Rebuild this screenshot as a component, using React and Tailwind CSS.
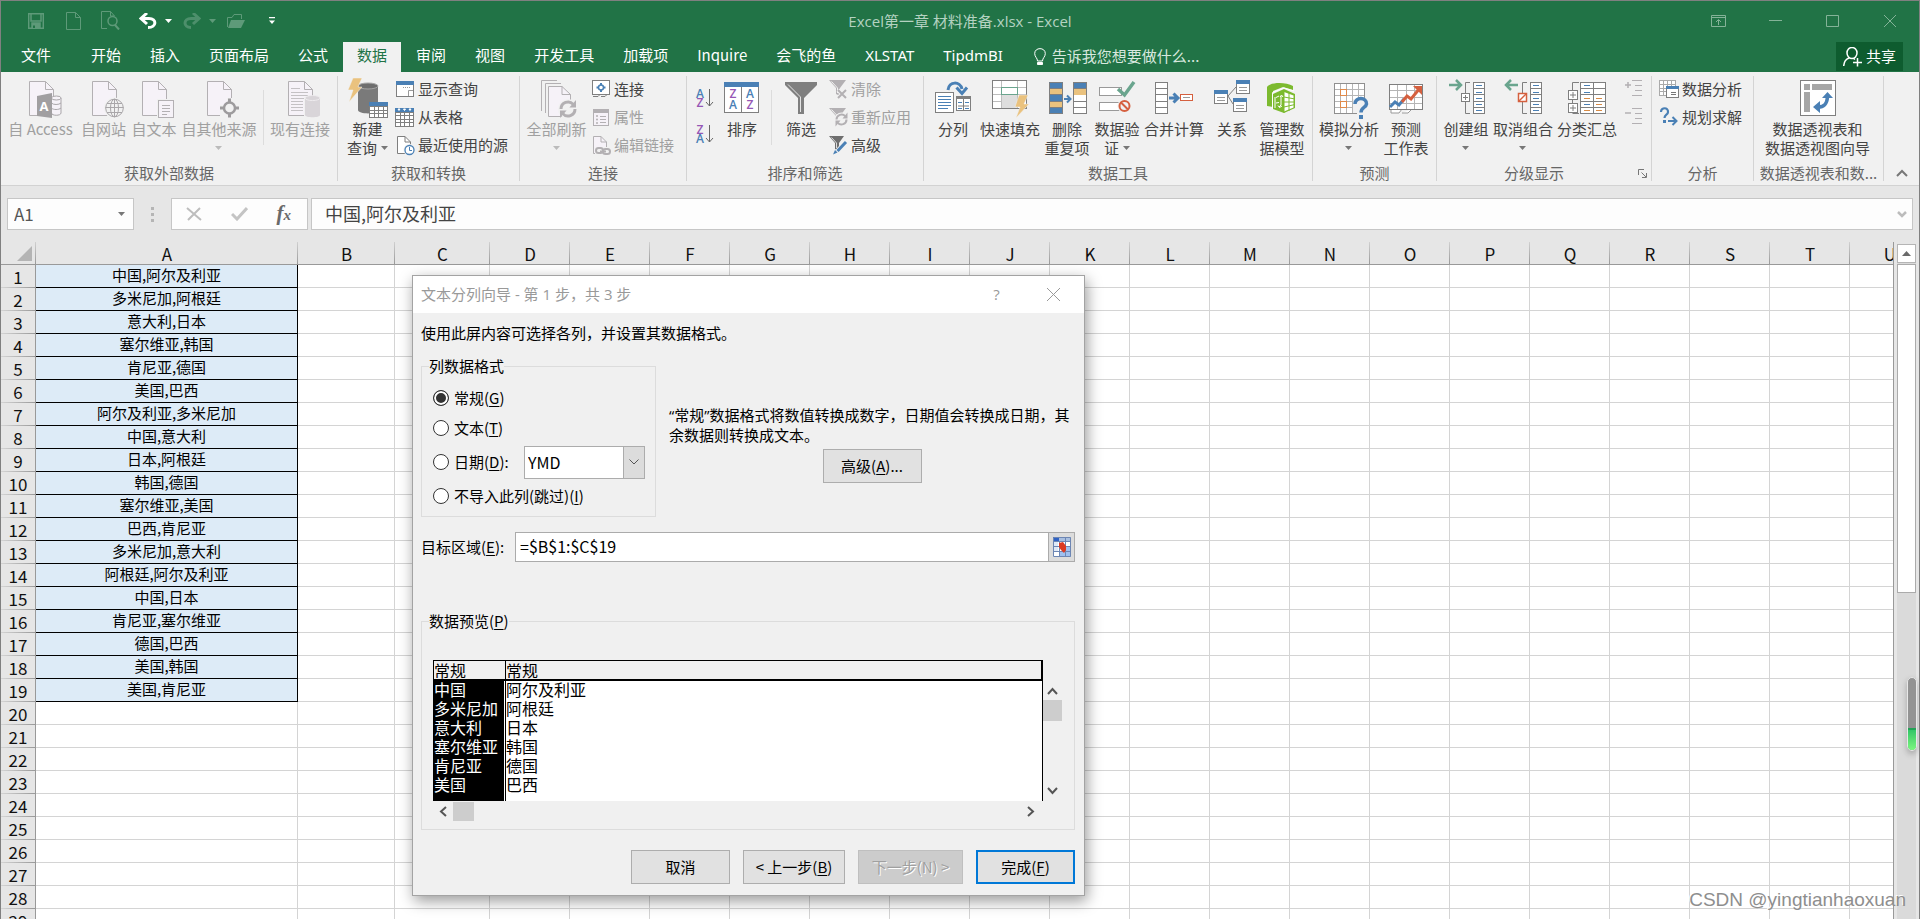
import React from "react";

const BLUE = "#4a80b5";
const GREY = "#7f7f7f";
const DIM = "#b3b0b3";
const GOLD = "#eac27e";
const RED = "#d5603f";
const PURPLE = "#9557b5";
const GREEN = "#6aa58e";
const PALE = "#f6f2f8";
const PANEL = "#f1f1f1";

/* ---------- drawing helpers ---------- */

function Icon({ size = 40, children }) {
  return (
    <svg
      width={size}
      height={size}
      viewBox={`0 0 ${size} ${size}`}
      fill="none"
      className="block shrink-0 overflow-visible"
      aria-hidden="true"
    >
      {children}
    </svg>
  );
}

function Letter({ x, y, size = 12, color, children, weight = "600" }) {
  return (
    <text x={x} y={y} fontSize={size} fill={color} fontWeight={weight} fontFamily="'Open Sans', sans-serif" textAnchor="middle">
      {children}
    </text>
  );
}

function Doc() {
  return (
    <>
      <path d="M8.500 2.500H24.500L32.500 10.500V36.500H8.500Z" fill={PALE} stroke={DIM} />
      <path d="M24.500 2.500V10.500H32.500" stroke={DIM} />
    </>
  );
}

function Cells({ x, y, w, h, cols, rows, stroke = GREY, fill = "#fff" }) {
  const lines = [];
  for (let i = 1; i < cols; i++) lines.push(`M${Math.round(x + (w * i) / cols - 0.5) + 0.5} ${y}V${y + h}`);
  for (let i = 1; i < rows; i++) lines.push(`M${x} ${Math.round(y + (h * i) / rows - 0.5) + 0.5}H${x + w}`);
  return (
    <>
      <rect x={x} y={y} width={w} height={h} fill={fill} stroke={stroke} />
      <path d={lines.join("")} stroke={stroke} />
    </>
  );
}

function Refresh({ cx, cy, r, color, sw = 3 }) {
  return (
    <g transform={`translate(${cx} ${cy})`} stroke={color} strokeWidth={sw}>
      <path d={`M${-r} 0A${r} ${r} 0 0 1 ${r * 0.75} ${-r * 0.66}`} />
      <path d={`M${r} 0A${r} ${r} 0 0 1 ${-r * 0.75} ${r * 0.66}`} />
      <path d={`M${r + 1} ${-r - 2}V${-r * 0.2}H${r * 0.2}Z`} fill={color} stroke="none" />
      <path d={`M${-r - 1} ${r + 2}V${r * 0.2}H${-r * 0.2}Z`} fill={color} stroke="none" />
    </g>
  );
}

/* ---------- large ribbon icons ---------- */

const AccessIcon = () => (
  <Icon>
    <Doc />
    <path d="M29 17H41V39H29Z" fill={PANEL} />
    <path d="M30.500 19V34C30.500 37 40 37 40 34V19" fill={PALE} stroke="#a9a6a9" />
    <ellipse cx="35.300" cy="19" rx="4.800" ry="2" fill={PALE} stroke="#a9a6a9" />
    <path d="M30.500 24C32 26 38 26 40 24M30.500 29C32 31 38 31 40 29" stroke="#a9a6a9" />
    <path d="M16 17L31 14V39L16 37Z" fill="#a19fa1" />
    <Letter x={23} y={32} size={13} color="#fff" weight="bold">A</Letter>
  </Icon>
);

const WebIcon = () => (
  <Icon>
    <Doc />
    <circle cx="30.500" cy="29" r="10.500" fill={PANEL} />
    <circle cx="30.500" cy="29" r="8.800" stroke="#a9a6a9" />
    <ellipse cx="30.500" cy="29" rx="4" ry="8.800" stroke="#a9a6a9" />
    <path d="M21.500 28.500H39.500M23 24.500H38M23 33.500H38M30.500 20V38" stroke="#a9a6a9" />
  </Icon>
);

const TextIcon = () => (
  <Icon>
    <Doc />
    <rect x="23" y="20" width="18" height="19" fill={PANEL} />
    <rect x="24.500" y="21.500" width="15" height="17" fill={PALE} stroke={DIM} />
    <path d="M28 26.500H36M28 29.500H36M28 32.500H36M28 35.500H33" stroke={DIM} />
  </Icon>
);

const OtherIcon = () => (
  <Icon>
    <Doc />
    <path d="M21 26H25L28 23V19H33V23L36 26H41V38H21Z" fill={PANEL} />
    <circle cx="30.500" cy="29" r="5.500" fill={PANEL} stroke="#9d9b9d" strokeWidth="2.500" />
    <path d="M30.500 19.500V24M30.500 34V38.500M21 29H25.500M35.500 29H40" stroke="#9d9b9d" strokeWidth="3" />
  </Icon>
);

const ExistingIcon = () => (
  <Icon>
    <Doc />
    <path d="M11 9.500H20M11 13.500H28M11 16.500H28M11 19.500H26M11 22.500H23M11 25.500H23M11 28.500H23M11 31.500H23" stroke="#c4c1c4" />
    <path d="M24 18H41V39H24Z" fill={PANEL} />
    <path d="M25 19V36C25 39 40 39 40 36V19Z" fill="#d9d5d9" />
    <ellipse cx="32.500" cy="19" rx="7.500" ry="2.500" fill="#d9d5d9" stroke="#efecef" />
  </Icon>
);

const NewQueryIcon = () => (
  <Icon>
    <path d="M10 7V31C10 35.500 30 35.500 30 31V7Z" fill="#7a7a7a" />
    <ellipse cx="20" cy="7" rx="10" ry="3" fill="#6e6e6e" stroke="#a5a5a5" />
    <path d="M5 -1H14L10 8H14L1 23L5 11H0Z" fill={GOLD} stroke={PANEL} strokeWidth="0.500" />
    <rect x="21" y="23" width="19" height="17" fill={PANEL} />
    <Cells x={21.5} y={23.5} w={18} h={15} cols={4} rows={4} />
    <rect x="21" y="23" width="19" height="4" fill={BLUE} />
  </Icon>
);

const RefreshAllIcon = () => (
  <Icon>
    <path d="M4.500 32V1.500H20M8.500 34V4.500H24" stroke={DIM} />
    <path d="M11.500 7.500H25L33.500 15.500V37.500H11.500Z" fill={PALE} stroke={DIM} />
    <path d="M25 7.500V15.500H33.500" stroke={DIM} />
    <circle cx="31" cy="30" r="10" fill={PANEL} />
    <Refresh cx={31} cy={30} r={7} color={DIM} />
  </Icon>
);

const SortIcon = () => (
  <Icon>
    <rect x="2.500" y="3.500" width="34" height="30" fill="#fff" stroke={GREY} />
    <rect x="2" y="3" width="35" height="5" fill={BLUE} />
    <path d="M19.500 8V34" stroke={GREY} />
    <Letter x={11} y={19} color={PURPLE}>Z</Letter>
    <Letter x={11} y={30} color={BLUE}>A</Letter>
    <Letter x={28} y={19} color={BLUE}>A</Letter>
    <Letter x={28} y={30} color={PURPLE}>Z</Letter>
  </Icon>
);

const FilterIcon = () => (
  <Icon>
    <path d="M4 3H36V6L23 19V35H17V19L4 6Z" fill={GREY} />
    <path d="M7 5.500L19.500 18V33" stroke="#e4e4e4" />
  </Icon>
);

const SplitIcon = () => (
  <Icon>
    <rect x="2.500" y="13.500" width="18" height="20" fill="#fff" stroke={GREY} />
    <path d="M5 17.500H18M5 20.500H18M5 23.500H18M5 26.500H18M5 29.500H15" stroke={BLUE} />
    <rect x="23.500" y="17.500" width="14" height="14" fill="#fff" stroke={GREY} />
    <rect x="23" y="17" width="15" height="3" fill={GREY} />
    <path d="M30.500 20V32M25 27H36" stroke={GREY} />
    <path d="M25 23.500H29M32 23.500H36M25 29.500H29M32 29.500H36" stroke={BLUE} />
    <path d="M15 11C16 2 27 2 29 10" stroke={BLUE} strokeWidth="3" />
    <path d="M23.500 8.500L29 14.500L34 8.500" stroke={BLUE} strokeWidth="3" />
  </Icon>
);

const FlashFillIcon = () => (
  <Icon>
    <rect x="2.500" y="1.500" width="34" height="28" fill="#fff" stroke={GREY} />
    <rect x="12" y="16" width="15" height="13" fill="#dedede" />
    <path d="M11.500 2V29M27.500 2V29M3 8.500H36M3 15.500H36M3 22.500H11" stroke="#bdbdbd" />
    <rect x="2.500" y="1.500" width="34" height="28" stroke={GREY} />
    <rect x="11.500" y="8.500" width="16" height="7" fill="#fff" stroke={GREEN} />
    <path d="M29 16H38L34 25H39L26 39L30 28H25Z" fill={GOLD} stroke={PANEL} strokeWidth="0.500" />
  </Icon>
);

const DedupeIcon = () => (
  <Icon>
    <rect x="2" y="3" width="14" height="32" fill={BLUE} />
    <path d="M2 9.500H16V15.500H2ZM2 22.500H16V28.500H2Z" fill={GOLD} />
    <path d="M2.500 3.500H15.500V34.500H2.500ZM2 9.500H16M2 15.500H16M2 22.500H16M2 28.500H16" stroke={GREY} />
    <path d="M17 20H23M20 16.500L23.500 20L20 23.500" stroke={BLUE} strokeWidth="2" />
    <Cells x={26.5} y={3.5} w={13} h={31} cols={1} rows={5} />
    <rect x="27" y="4" width="12" height="5" fill={BLUE} />
    <rect x="27" y="10" width="12" height="6" fill={GOLD} />
  </Icon>
);

const ValidateIcon = () => (
  <Icon>
    <rect x="2.500" y="8.500" width="22" height="8" fill="#fff" stroke="#999" />
    <rect x="2.500" y="23.500" width="22" height="8" fill="#fff" stroke="#999" />
    <path d="M21 10L27.500 16L37 3" stroke={GREEN} strokeWidth="3.500" />
    <circle cx="27.500" cy="27" r="7" fill={PANEL} />
    <circle cx="27.500" cy="27" r="5" stroke={RED} strokeWidth="2" />
    <path d="M24 23.500L31 30.500" stroke={RED} strokeWidth="2" />
  </Icon>
);

const ConsolidateIcon = () => (
  <Icon>
    <Cells x={1.5} y={3.5} w={12} h={31} cols={1} rows={5} />
    <path d="M15 19H24M19.500 14.500L24 19L19.500 23.500" stroke={BLUE} strokeWidth="3" />
    <rect x="26.500" y="15.500" width="12" height="6" fill="#fff" stroke={RED} />
    <path d="M29 18.500H36" stroke="#999" />
  </Icon>
);

function Entity({ x, y }) {
  return (
    <>
      <rect x={x + 0.5} y={y + 0.5} width="13" height="13" fill="#fff" stroke={GREY} />
      <rect x={x} y={y} width="14" height="4" fill={BLUE} />
      <path d={`M${x + 3} ${y + 7.5}H${x + 11}M${x + 3} ${y + 10.5}H${x + 11}`} stroke="#999" />
    </>
  );
}

const RelationIcon = () => (
  <Icon>
    <path d="M16 17L24 8M16 17L21 25" stroke={GREY} />
    <Entity x={2} y={11} />
    <Entity x={24} y={1} />
    <Entity x={21} y={19} />
  </Icon>
);

const ModelIcon = () => (
  <Icon>
    <path d="M5 8C8 3 24 3 31 7V11L21 8L11 12V28L5 27Z" fill="#7cba2f" />
    <path d="M11 15L22 10L33 15V29L22 34L11 30Z" fill="#7cba2f" />
    <path d="M10.500 30V13.500L22 9L32 12" stroke="#fff" />
    <path d="M22 13L31.500 16.500V28.500L22 32.500Z" fill="#fff" />
    <path d="M22 11V34M27 13V32M22 18L33 20M22 23H33M22 28L33 25.500" stroke="#7cba2f" />
    <path d="M13 18V29M14 18.500L17 17M14 24L17 23.500M19 17V26L17 28M16 26.500L17.500 28.500L20 27M18 18L19.500 16L21 18" stroke="#fff" />
  </Icon>
);

const WhatIfIcon = () => (
  <Icon>
    <Cells x={5.5} y={4.5} w={30} h={30} cols={5} rows={5} stroke="#b5b5b5" />
    <rect x="5.500" y="4.500" width="30" height="30" stroke="#8f8f8f" />
    <rect x="11.500" y="10.500" width="6" height="6" fill="#fff" stroke="#e08a4a" />
    <rect x="11.500" y="22.500" width="6" height="6" fill="#fff" stroke="#e08a4a" />
    <path d="M24 20H40V40H28V34H24Z" fill={PANEL} />
    <path d="M26 25C26 17.500 38 18 37.500 25C37 29 32 28 32 33.500" stroke={BLUE} strokeWidth="3.500" />
    <rect x="30" y="36" width="4" height="4" fill={BLUE} />
  </Icon>
);

const ForecastIcon = () => (
  <Icon>
    <path d="M5 30V34H13L16 30M16 34H22L26 30" fill="#fff" stroke="#999" />
    <Cells x={3.5} y={5.5} w={33} h={25} cols={4} rows={4} stroke="#b5b5b5" />
    <rect x="3.500" y="5.500" width="33" height="25" stroke={GREY} />
    <path d="M4 28L9 23L13 26L18 20" stroke={BLUE} strokeWidth="3" />
    <path d="M16 23L21 17L25 20L34 9" stroke={RED} strokeWidth="3" />
    <path d="M27 7H36V16Z" fill={RED} />
  </Icon>
);

const GroupIcon = () => (
  <Icon>
    <path d="M3 6H15M10 1L15 6L10 11" stroke={GREEN} strokeWidth="2.500" />
    <path d="M24 3.500H19.500V14M19.500 23V34.500H24" stroke={GREY} />
    <rect x="15.500" y="14.500" width="8" height="8" fill="#fff" stroke={GREY} />
    <path d="M17 18.500H22M19.500 16V21" stroke={GREY} />
    <Cells x={27.5} y={3.5} w={11} h={31} cols={1} rows={5} />
    <path d="M30 6.500H36M30 13.500H36M30 19.500H36M30 25.500H36M30 31.500H36" stroke={BLUE} />
  </Icon>
);

const UngroupIcon = () => (
  <Icon>
    <path d="M15 6H3M8 1L3 6L8 11" stroke={GREEN} strokeWidth="2.500" />
    <path d="M24 3.500H19.500V14M19.500 23V34.500H24" stroke={GREY} />
    <rect x="15.500" y="14.500" width="8" height="8" fill="#fff" stroke={RED} strokeWidth="1.500" />
    <path d="M16 22L23 15" stroke={RED} strokeWidth="1.500" />
    <Cells x={27.5} y={3.5} w={11} h={31} cols={1} rows={5} />
    <path d="M30 6.500H36M30 13.500H36M30 19.500H36M30 25.500H36M30 31.500H36" stroke={BLUE} />
  </Icon>
);

const SubtotalIcon = () => (
  <Icon>
    <path d="M12 3.500H5.500V11M5.500 21V24M12 34.500H5.500" stroke={GREY} />
    <rect x="1.500" y="11.500" width="9" height="9" fill="#fff" stroke={GREY} />
    <rect x="1.500" y="24.500" width="9" height="9" fill="#fff" stroke={GREY} />
    <path d="M3 16H9M6 13V19M3 29H9M6 26V32" stroke={GREY} />
    <Cells x={13.5} y={3.5} w={25} h={31} cols={2} rows={5} />
    <path d="M17 6.500H23M17 13.500H23M17 25.500H23" stroke={BLUE} />
    <path d="M17 19.500H23M29 19.500H35M17 31.500H23M29 31.500H35M29 25.500H35" stroke="#d88b45" />
  </Icon>
);

const PivotIcon = () => (
  <Icon>
    <rect x="2.500" y="1.500" width="35" height="35" fill="#fff" stroke={GREY} />
    <path d="M6 5H12V11H6ZM14 5H34V11H14ZM6 13H12V33H6Z" fill="#a6a6a6" />
    <path d="M20 28C27 28 29 24 29.500 18" stroke={BLUE} strokeWidth="3.500" />
    <path d="M24 19L29.500 13L35 19ZM22 22V34L15 28Z" fill={BLUE} />
  </Icon>
);

/* ---------- small ribbon icons ---------- */

const ShowQueryIcon = () => (
  <Icon size={20}>
    <rect x="1.500" y="1.500" width="17" height="15" fill="#fff" stroke={GREY} />
    <rect x="1" y="1" width="18" height="4" fill={BLUE} />
    <path d="M8 7.500H16" stroke="#999" strokeDasharray="1 1" />
    <path d="M13.500 16V10.500H18" stroke="#999" />
  </Icon>
);

const FromTableIcon = () => (
  <Icon size={20}>
    <Cells x={0.5} y={0.5} w={18} h={18} cols={4} rows={5} />
    <rect x="0" y="0" width="19" height="4" fill={BLUE} />
    <path d="M3 1L4 2.500L5 1ZM8.500 1L9.500 2.500L10.500 1ZM14 1L15 2.500L16 1Z" fill="#fff" stroke="#fff" />
  </Icon>
);

const RecentIcon = () => (
  <Icon size={20}>
    <path d="M2.500 .5H10L15.500 6V17.500H2.500Z" fill="#fff" stroke={GREY} />
    <path d="M10 .5V6H15.500" stroke={GREY} />
    <circle cx="14.500" cy="14" r="6" fill={PANEL} />
    <circle cx="14.500" cy="14" r="4.500" fill="#fff" stroke={BLUE} strokeWidth="1.300" />
    <path d="M14.500 11V14.500H17" stroke={BLUE} />
  </Icon>
);

const LinkIcon = () => (
  <Icon size={20}>
    <rect x="1.500" y=".5" width="17" height="14" fill="#fff" stroke={GREY} />
    <circle cx="10" cy="7.500" r="2.500" stroke={BLUE} strokeWidth="1.500" />
    <path d="M10 3V5M10 10V12M5.500 7.500H7.500M12.500 7.500H14.500" stroke={BLUE} strokeWidth="2" />
    <path d="M2 16.500H7L8.500 15M10 16.500H14L15.500 15" stroke={GREY} />
  </Icon>
);

const PropsIcon = () => (
  <Icon size={20}>
    <rect x="2.500" y="1.500" width="15" height="16" fill={PALE} stroke={DIM} />
    <rect x="2" y="1" width="16" height="4" fill={DIM} />
    <circle cx="6" cy="8" r="1" fill={DIM} />
    <circle cx="6" cy="11.500" r="1" fill={DIM} />
    <circle cx="6" cy="15" r="1" fill={DIM} />
    <path d="M9 8.500H15M9 11.500H15M9 14.500H15" stroke={DIM} />
  </Icon>
);

const EditLinkIcon = () => (
  <Icon size={20}>
    <path d="M2.500 .5H10L15.500 6V17.500H2.500Z" fill={PALE} stroke={DIM} />
    <path d="M10 .5V6H15.500" stroke={DIM} />
    <rect x="4" y="11" width="16" height="9" fill={PANEL} />
    <rect x="5" y="12" width="7" height="5" rx="2.500" stroke={DIM} strokeWidth="2" />
    <rect x="12" y="13" width="7" height="5" rx="2.500" stroke={DIM} strokeWidth="2" />
    <path d="M9 15.500H15" stroke={DIM} strokeWidth="2" />
  </Icon>
);

const SortLetters = ({ first, last, firstColor, lastColor }) => (
  <Icon size={20}>
    <Letter x={5} y={10} color={firstColor}>{first}</Letter>
    <Letter x={5} y={19} color={lastColor}>{last}</Letter>
    <path d="M14.500 1V18M11 14L14.500 18L18 14" stroke="#666" />
  </Icon>
);

const ClearIcon = () => (
  <Icon size={20}>
    <path d="M1 0H18L12 8V16L8 14V8Z" fill={DIM} />
    <path d="M3.500 1.500L9.500 8V13" stroke={PANEL} />
    <path d="M10 10L18 18M18 10L10 18" stroke={PANEL} strokeWidth="4" />
    <path d="M10 10L18 18M18 10L10 18" stroke={DIM} strokeWidth="2" />
  </Icon>
);

const ReapplyIcon = () => (
  <Icon size={20}>
    <path d="M1 0H18L12 8V16L8 14V8Z" fill={DIM} />
    <path d="M3.500 1.500L9.500 8V13" stroke={PANEL} />
    <circle cx="13.500" cy="11.500" r="7" fill={PANEL} />
    <Refresh cx={13.5} cy={11.5} r={5} color={DIM} sw={2} />
  </Icon>
);

const AdvancedIcon = () => (
  <Icon size={20}>
    <path d="M1 0H16L11 7V15L7 13V7Z" fill="#6e6e6e" />
    <path d="M3.500 1.500L8.500 7V12" stroke="#ddd" />
    <path d="M19 5L8 17" stroke={PANEL} strokeWidth="5" />
    <path d="M18 6L9.500 15" stroke={BLUE} strokeWidth="3" />
    <path d="M5 18.500L7 14L9.500 16.500Z" fill={BLUE} />
  </Icon>
);

const DetailIcon = ({ plus }) => (
  <Icon size={20}>
    <path d={plus ? "M2 5H8M5 2V8" : "M2 5H8"} stroke={DIM} strokeWidth="1.500" />
    <path d="M9 .5H19M12 5.500H19M12 10.500H19M9 15.500H19" stroke={DIM} />
  </Icon>
);

const AnalysisIcon = () => (
  <Icon size={20}>
    <Cells x={0.5} y={0.5} w={16} h={15} cols={4} rows={4} stroke="#aaa" />
    <rect x="7.500" y="6.500" width="12" height="11" fill="#fff" stroke={GREY} />
    <rect x="7" y="6" width="13" height="3" fill={BLUE} />
    <path d="M12 12.500H17M12 14.500H17" stroke="#777" />
  </Icon>
);

const SolverIcon = () => (
  <Icon size={20}>
    <path d="M2 4C2 -1 9.500 -1 9 4C9 7 5.500 6.500 5.500 10" stroke={BLUE} strokeWidth="2.200" />
    <rect x="4" y="12" width="3" height="3" fill={BLUE} />
    <path d="M9 13H17M13.500 9L17.500 13L13.500 17" stroke={BLUE} strokeWidth="2" />
  </Icon>
);

/* ---------- ribbon building blocks ---------- */

function Arrow({ className = "text-[#777]" }) {
  return (
    <svg width="7" height="4" viewBox="0 0 7 4" className={`inline-block shrink-0 ${className}`} aria-hidden="true">
      <path d="M0 0H7L3.500 4Z" fill="currentColor" />
    </svg>
  );
}

function Big({ icon, lines, arrow, disabled, className }) {
  const tone = disabled ? "text-[#a0a0a0]" : "text-[#444]";
  return (
    <button type="button" disabled={disabled} className={`flex shrink-0 flex-col items-center pt-[3px] ${tone} ${className}`}>
      {icon}
      <span className="flex flex-col items-center whitespace-nowrap leading-[19px]">
        <span>{lines[0]}</span>
        <span className="flex h-[19px] items-center gap-1">
          {lines[1]}
          {arrow && <Arrow className={disabled ? "text-[#bbb]" : "text-[#777]"} />}
        </span>
      </span>
    </button>
  );
}

function Small({ icon, label, disabled, name }) {
  return (
    <button
      type="button"
      disabled={disabled}
      aria-label={name}
      className={`flex h-7 items-center gap-[3px] whitespace-nowrap leading-5 ${disabled ? "text-[#a0a0a0]" : "text-[#444]"}`}
    >
      {icon}
      {label && <span className="pb-[3px]">{label}</span>}
    </button>
  );
}

function Group({ label, className, children, launcher, inset = "pl-1" }) {
  return (
    <section aria-label={label} className={`flex shrink-0 flex-col border-r border-[#d4d4d4] ${className}`}>
      <div className={`flex flex-1 items-start ${inset}`}>{children}</div>
      <div className="flex items-center justify-center">
        <h2 className="flex-1 whitespace-nowrap text-center leading-4 text-[#666]">{label}</h2>
        {launcher && (
          <button type="button" aria-label="对话框启动器" className="w-5 pr-1">
            <svg width="9" height="9" viewBox="0 0 9 9" fill="none" stroke="#777" className="ml-auto">
              <path d="M0.500 6V0.500H6M3.500 3.500L8 8M8.500 4V8.500H4" />
            </svg>
          </button>
        )}
      </div>
    </section>
  );
}

const Rule = ({ className }) => <div className={`mt-[14px] h-[55px] w-px bg-[#dcdcdc] ${className}`} />;

function Ribbon() {
  return (
    <div className="flex h-[114px] shrink-0 overflow-hidden border-b border-[#d2d2d2] bg-[#f1f1f1] py-1">
      <Group label="获取外部数据" className="w-[337px]" inset="pl-[2px]">
        <Big className="w-[75px]" disabled icon={<AccessIcon />} lines={["自 Access"]} />
        <Big className="w-[51px]" disabled icon={<WebIcon />} lines={["自网站"]} />
        <Big className="w-[50px]" disabled icon={<TextIcon />} lines={["自文本"]} />
        <Big className="w-20" disabled arrow icon={<OtherIcon />} lines={["自其他来源"]} />
        <Rule className="mx-1" />
        <Big className="w-16" disabled icon={<ExistingIcon />} lines={["现有连接"]} />
      </Group>
      <Group label="获取和转换" className="w-[182px]" inset="pl-[2px]">
        <Big className="w-[55px]" arrow icon={<NewQueryIcon />} lines={["新建", "查询"]} />
        <div className="flex flex-col">
          <Small icon={<ShowQueryIcon />} label="显示查询" />
          <Small icon={<FromTableIcon />} label="从表格" />
          <Small icon={<RecentIcon />} label="最近使用的源" />
        </div>
      </Group>
      <Group label="连接" className="w-[167px]" inset="pl-[2px]">
        <Big className="w-[69px]" disabled arrow icon={<RefreshAllIcon />} lines={["全部刷新"]} />
        <div className="flex flex-col">
          <Small icon={<LinkIcon />} label="连接" />
          <Small disabled icon={<PropsIcon />} label="属性" />
          <Small disabled icon={<EditLinkIcon />} label="编辑链接" />
        </div>
      </Group>
      <Group label="排序和筛选" className="w-[237px]" inset="pl-2">
        <div className="flex flex-col pt-1">
          <button type="button" aria-label="升序" className="flex h-9 items-center">
            <SortLetters first="A" last="Z" firstColor={BLUE} lastColor={PURPLE} />
          </button>
          <button type="button" aria-label="降序" className="flex h-9 items-center">
            <SortLetters first="Z" last="A" firstColor={PURPLE} lastColor={BLUE} />
          </button>
        </div>
        <Big className="w-[54px]" icon={<SortIcon />} lines={["排序"]} />
        <Rule className="mx-[2px]" />
        <Big className="w-[54px]" icon={<FilterIcon />} lines={["筛选"]} />
        <div className="flex flex-col">
          <Small disabled icon={<ClearIcon />} label="清除" />
          <Small disabled icon={<ReapplyIcon />} label="重新应用" />
          <Small icon={<AdvancedIcon />} label="高级" />
        </div>
      </Group>
      <Group label="数据工具" className="w-[389px]">
        <Big className="w-[50px]" icon={<SplitIcon />} lines={["分列"]} />
        <Big className="w-16" icon={<FlashFillIcon />} lines={["快速填充"]} />
        <Big className="w-[50px]" icon={<DedupeIcon />} lines={["删除", "重复项"]} />
        <Big className="w-[50px]" arrow icon={<ValidateIcon />} lines={["数据验", "证"]} />
        <Big className="w-16" icon={<ConsolidateIcon />} lines={["合并计算"]} />
        <Big className="w-[52px]" icon={<RelationIcon />} lines={["关系"]} />
        <Big className="w-[48px]" icon={<ModelIcon />} lines={["管理数", "据模型"]} />
      </Group>
      <Group label="预测" className="w-[124px]">
        <Big className="w-16" arrow icon={<WhatIfIcon />} lines={["模拟分析"]} />
        <Big className="w-[50px]" icon={<ForecastIcon />} lines={["预测", "工作表"]} />
      </Group>
      <Group label="分级显示" className="w-[215px]" launcher>
        <Big className="w-[50px]" arrow icon={<GroupIcon />} lines={["创建组"]} />
        <Big className="w-16" arrow icon={<UngroupIcon />} lines={["取消组合"]} />
        <Big className="w-16" icon={<SubtotalIcon />} lines={["分类汇总"]} />
        <div className="flex flex-col pl-1">
          <Small disabled name="显示明细数据" icon={<DetailIcon plus />} />
          <Small disabled name="隐藏明细数据" icon={<DetailIcon />} />
        </div>
      </Group>
      <Group label="分析" className="w-[102px]" inset="pl-[7px]">
        <div className="flex flex-col">
          <Small icon={<AnalysisIcon />} label="数据分析" />
          <Small icon={<SolverIcon />} label="规划求解" />
        </div>
      </Group>
      <Group label="数据透视表和数..." className="w-[130px]" inset="pr-[2px]">
        <Big className="w-full" icon={<PivotIcon />} lines={["数据透视表和", "数据透视图向导"]} />
      </Group>
      <button type="button" aria-label="折叠功能区" className="mt-auto flex h-4 flex-1 items-center justify-center">
        <svg width="12" height="8" viewBox="0 0 12 8" fill="none" stroke="#777" strokeWidth="2">
          <path d="M1 7L6 2L11 7" />
        </svg>
      </button>
    </div>
  );
}

/* ---------- title bar and tabs ---------- */

function QuickAccess() {
  const dim = "#5e9a79";
  return (
    <div className="flex items-center pl-[27px]">
      <button type="button" aria-label="保存" className="w-[38px]">
        <svg width="16" height="16" viewBox="0 0 16 16" fill="none" stroke={dim} strokeWidth="1.500">
          <path d="M.7 .7H15.300V15.300H.7ZM3 1V8H13V1" />
          <path d="M4 10H12V16H4Z" fill={dim} />
          <path d="M6 12.500V15" stroke="#217346" strokeWidth="2" />
        </svg>
      </button>
      <button type="button" aria-label="新建" className="w-[35px]">
        <svg width="15" height="18" viewBox="0 0 15 18" fill="none" stroke={dim}>
          <path d="M.5 .5H9.500L14.500 5.500V17.500H.5ZM9.500 .5V5.500H14.500" />
        </svg>
      </button>
      <button type="button" aria-label="打印预览" className="w-[38px]">
        <svg width="19" height="19" viewBox="0 0 19 19" fill="none" stroke={dim}>
          <path d="M6 17.500H.5V.5H9.500L13.500 5M9.500 .5V5H13.500" />
          <circle cx="11.500" cy="10" r="4.500" strokeWidth="1.500" fill="#217346" />
          <path d="M14 14L18 18.500" strokeWidth="2" />
        </svg>
      </button>
      <button type="button" aria-label="撤消" className="flex w-11 items-center gap-2">
        <svg width="18" height="16" viewBox="0 0 18 16" fill="none" stroke="#fff" strokeWidth="3">
          <path d="M3 5.500H10C18 5.500 18 14.500 9 14.500" />
          <path d="M8 0L2 5.500L8 11" />
        </svg>
        <Arrow className="text-white" />
      </button>
      <button type="button" aria-label="恢复" disabled className="flex w-11 items-center gap-2">
        <svg width="18" height="16" viewBox="0 0 18 16" fill="none" stroke="#4d8f6b" strokeWidth="3">
          <path d="M15 5.500H8C0 5.500 0 14.500 8 14.500" />
          <path d="M10 0L16 5.500L10 11" />
        </svg>
        <Arrow className="text-[#5e9a79]" />
      </button>
      <button type="button" aria-label="打开" className="w-[42px]">
        <svg width="18" height="14" viewBox="0 0 18 14" fill="none">
          <path d="M.5 13V3.500H5L7 .5H14.500V5" stroke={dim} />
          <path d="M4 6H18L14 14H1Z" fill={dim} />
        </svg>
      </button>
      <button type="button" aria-label="自定义快速访问工具栏">
        <svg width="6" height="7" viewBox="0 0 6 7" fill="#fff">
          <path d="M0 0H6V1.200H0ZM0 3.500H6L3 7Z" />
        </svg>
      </button>
    </div>
  );
}

function TitleBar() {
  return (
    <div className="grid h-[41px] shrink-0 grid-cols-[1fr_auto_1fr] items-center pb-[2px]">
      <QuickAccess />
      <h1 className="font-['Open_Sans','Noto_Sans_CJK_SC',sans-serif] leading-5 text-[#b4d2c1]">Excel第一章 材料准备.xlsx - Excel</h1>
      <div className="flex justify-end pr-px">
        <button type="button" aria-label="功能区显示选项" className="flex w-[57px] justify-center">
          <svg width="15" height="12" viewBox="0 0 15 12" fill="none" stroke="#84b398">
            <path d="M.5 .5H14.500V11.500H.5ZM.5 2.500H14.500M7.500 10V5M5 7L7.500 4.500L10 7" />
          </svg>
        </button>
        <button type="button" aria-label="最小化" className="flex w-[57px] items-center justify-center">
          <svg width="13" height="1" viewBox="0 0 13 1"><path d="M0 .5H13" stroke="#84b398" /></svg>
        </button>
        <button type="button" aria-label="最大化" className="flex w-[57px] justify-center">
          <svg width="13" height="12" viewBox="0 0 13 12"><path d="M.5 .5H12.500V11.500H.5Z" fill="none" stroke="#84b398" /></svg>
        </button>
        <button type="button" aria-label="关闭" className="flex w-[57px] justify-center">
          <svg width="12" height="12" viewBox="0 0 12 12"><path d="M0 0L12 12M12 0L0 12" stroke="#84b398" /></svg>
        </button>
      </div>
    </div>
  );
}

const TABS = ["开始", "插入", "页面布局", "公式", "数据", "审阅", "视图", "开发工具", "加载项", "Inquire", "会飞的鱼", "XLSTAT", "TipdmBI"];

function TabStrip() {
  return (
    <nav className="flex h-[30px] shrink-0 items-stretch gap-px whitespace-nowrap text-white">
      <button type="button" className="mr-[5px] px-5 pb-[3px]">文件</button>
      {TABS.map((t) => (
        <button
          key={t}
          type="button"
          className={t === "数据" ? "bg-[#f1f1f1] px-[14px] pb-[3px] text-[#217346]" : "px-[14px] pb-[3px]"}
        >
          {t === "XLSTAT" || t === "TipdmBI" ? <span className="font-['Noto_Sans',sans-serif]">{t}</span> : t}
        </button>
      ))}
      <button type="button" className="ml-4 flex items-center gap-[6px] text-[#d8e8df]">
        <svg width="12" height="18" viewBox="0 0 12 18" fill="none" stroke="#fff">
          <path d="M3.500 13C3.500 10 .7 9 .7 5.500C.7 -1 11.300 -1 11.300 5.500C11.300 9 8.500 10 8.500 13Z" />
          <path d="M3.500 14.500H8.500V16.500H3.500Z" fill="#fff" />
        </svg>
        <span className="pb-px">告诉我您想要做什么...</span>
      </button>
      <button type="button" className="mb-px ml-auto mr-4 flex items-center gap-1 bg-[#0e5c2f] px-[7px]">
        <svg width="19" height="20" viewBox="0 0 19 20" fill="none" stroke="#fff" strokeWidth="1.500">
          <ellipse cx="9" cy="6" rx="5" ry="5.500" />
          <path d="M.7 19C1 14.500 3 12 6 11M10.500 11.500L12 12.500M14.500 11V19.500M10 15.500H19" />
        </svg>
        共享
      </button>
    </nav>
  );
}

/* ---------- formula bar ---------- */

function FormulaBar() {
  return (
    <div className="flex h-14 shrink-0 items-start bg-[#e6e6e6] pl-[6px] pr-[6px] pt-3 text-[18px] text-[#444]">
      <div className="flex h-8 w-[127px] items-center border border-[#c6c6c6] bg-[#fdfdfd] pr-2">
        <input aria-label="名称框" defaultValue="A1" className="w-full min-w-0 bg-transparent pl-[6px] text-[17px] text-[#555] outline-none" />
        <button type="button" aria-label="名称列表" className="flex"><Arrow /></button>
      </div>
      <div className="flex h-8 w-[37px] flex-col items-center justify-center gap-[3px]">
        <i className="size-[3px] bg-[#b5b5b5]" />
        <i className="size-[3px] bg-[#b5b5b5]" />
        <i className="size-[3px] bg-[#b5b5b5]" />
      </div>
      <div className="flex h-8 w-[137px] items-center justify-between border border-[#c6c6c6] bg-[#fdfdfd] pl-[14px] pr-4">
        <button type="button" aria-label="取消输入">
          <svg width="16" height="14" viewBox="0 0 16 14"><path d="M1 1L15 13M14 1L2 13" stroke="#bdbdbd" strokeWidth="2" /></svg>
        </button>
        <button type="button" aria-label="输入">
          <svg width="17" height="14" viewBox="0 0 17 14"><path d="M1 7L6 12L16 1" fill="none" stroke="#c4c4c4" strokeWidth="3" /></svg>
        </button>
        <button type="button" aria-label="插入函数" className="flex items-baseline font-['Liberation_Serif',serif] font-bold italic leading-6 text-[#6a6a6a]">
          <span className="text-[21px]">f</span>
          <span className="text-[15px]">x</span>
        </button>
      </div>
      <div className="ml-[3px] flex h-8 flex-1 items-center border border-[#c6c6c6] bg-[#fdfdfd] pr-[5px]">
        <input aria-label="编辑栏" defaultValue="中国,阿尔及利亚" className="w-full min-w-0 bg-transparent pb-[2px] pl-[13px] outline-none" />
        <button type="button" aria-label="展开编辑栏">
          <svg width="10" height="7" viewBox="0 0 10 7"><path d="M1 1L5 5L9 1" fill="none" stroke="#bcbcbc" strokeWidth="2.500" /></svg>
        </button>
      </div>
    </div>
  );
}

/* ---------- worksheet ---------- */

const DATA = [
  "中国,阿尔及利亚", "多米尼加,阿根廷", "意大利,日本", "塞尔维亚,韩国", "肯尼亚,德国", "美国,巴西", "阿尔及利亚,多米尼加",
  "中国,意大利", "日本,阿根廷", "韩国,德国", "塞尔维亚,美国", "巴西,肯尼亚", "多米尼加,意大利", "阿根廷,阿尔及利亚",
  "中国,日本", "肯尼亚,塞尔维亚", "德国,巴西", "美国,韩国", "美国,肯尼亚",
];
const COLUMNS = "ABCDEFGHIJKLMNOPQRSTU".split("");
const COL_CLASS = { A: "w-[262px]", B: "w-[97px]", C: "w-[95px]" };
const ROWS = Array.from({ length: 29 }, (_, i) => i + 1);

function Sheet() {
  return (
    <div className="min-w-0 flex-1 overflow-hidden border-r border-[#999] bg-white">
      <table className="w-max table-fixed border-separate border-spacing-0">
        <colgroup>
          <col className="w-[35px]" />
          {COLUMNS.map((c) => (
            <col key={c} className={COL_CLASS[c] || "w-20"} />
          ))}
        </colgroup>
        <thead>
          <tr className="h-[23px] bg-[#e6e6e6] text-[17px] leading-[20px]">
            <th className="border-b border-[#999] bg-[linear-gradient(#d0d0d0,#999)] bg-[length:1px_100%] bg-right bg-no-repeat p-0">
              <svg width="15" height="15" viewBox="0 0 15 15" className="ml-auto mr-1">
                <path d="M15 0V15H0Z" fill="#b4b4b4" />
              </svg>
            </th>
            {COLUMNS.map((c) => (
              <th
                key={c}
                scope="col"
                className="border-b border-[#999] bg-[linear-gradient(#d0d0d0,#999)] bg-[length:1px_100%] bg-right bg-no-repeat p-0 pt-[2px] font-normal text-[#111]"
              >
                {c}
              </th>
            ))}
          </tr>
        </thead>
        <tbody>
          {ROWS.map((r) => (
            <tr key={r} className="h-[23px]">
              <th
                scope="row"
                className="border-r border-[#999] bg-[#e6e6e6] bg-[linear-gradient(to_right,#d4d4d4,#999)] bg-[length:100%_1px] bg-bottom bg-no-repeat p-0 pt-px text-[17px] font-normal leading-[20px] text-[#111]"
              >
                {r}
              </th>
              {COLUMNS.map((c) => {
                const value = c === "A" ? DATA[r - 1] : undefined;
                return (
                  <td
                    key={c}
                    className={
                      value
                        ? "border-b border-r border-black bg-[#ddebf7] p-0 pb-[2px] text-center leading-[20px] text-black"
                        : "border-b border-r border-[#d4d4d4] p-0"
                    }
                  >
                    {value}
                  </td>
                );
              })}
            </tr>
          ))}
        </tbody>
      </table>
    </div>
  );
}

function SheetScrollbar() {
  return (
    <div className="flex w-[25px] shrink-0 flex-col bg-[#e6e6e6] pl-[3px] pr-[3px] pt-[2px]">
      <button type="button" aria-label="向上滚动" className="flex h-[19px] shrink-0 items-center justify-center border border-[#b5b5b5] bg-white">
        <svg width="9" height="5" viewBox="0 0 9 5"><path d="M4.500 0L9 5H0Z" fill="#6a6a6a" /></svg>
      </button>
      <div className="flex flex-1 flex-col bg-[#dadada] pt-px">
        <div className="h-[329px] border border-[#ababab] bg-white" />
      </div>
    </div>
  );
}

/* ---------- wizard dialog ---------- */

const Key = ({ children }) => <span>(<u className="underline-offset-2">{children}</u>)</span>;

const PREVIEW = [
  ["中国", "阿尔及利亚"], ["多米尼加", "阿根廷"], ["意大利", "日本"], ["塞尔维亚", "韩国"], ["肯尼亚", "德国"], ["美国", "巴西"],
];

function Chevron({ d, w, h }) {
  return (
    <svg width={w} height={h} viewBox={`0 0 ${w} ${h}`} fill="none" stroke="#555" strokeWidth="2">
      <path d={d} />
    </svg>
  );
}

function FormatOption({ id, text, k, checked, className = "", suffix = "" }) {
  return (
    <div className={`flex items-center ${className}`}>
      <input
        type="radio"
        name="format"
        id={id}
        defaultChecked={checked}
        className="size-4 shrink-0 appearance-none rounded-full border border-[#333] bg-white checked:bg-[#333] checked:shadow-[inset_0_0_0_2px_white]"
      />
      <label htmlFor={id} className="pl-[5px] leading-5">
        {text}
        <Key>{k}</Key>
        {suffix}
      </label>
    </div>
  );
}

function Preview() {
  return (
    <div className="mt-[30px] pl-[11px] pr-3">
      <div className="flex">
        <div className="min-w-0 flex-1 bg-white">
          <table className="w-full table-fixed border-separate border-spacing-0 text-[16px] leading-[17px]">
            <colgroup>
              <col className="w-[72px]" />
              <col />
            </colgroup>
            <thead>
              <tr className="h-[21px] bg-[#f0f0f0] text-left">
                <th className="border-b-2 border-l border-t border-black p-0 font-normal">常规</th>
                <th className="border-b-2 border-l border-r-2 border-t border-black p-0 font-normal">常规</th>
              </tr>
            </thead>
            <tbody>
              {PREVIEW.map(([a, b]) => (
                <tr key={a} className="h-[19px]">
                  <td className="border-r border-white bg-black p-0 pb-[2px] pl-px text-white">{a}</td>
                  <td className="border-l border-r border-black p-0 pb-[2px]">{b}</td>
                </tr>
              ))}
              <tr className="h-[6px]">
                <td className="border-r border-white bg-black p-0" />
                <td className="border-l border-r border-black p-0" />
              </tr>
            </tbody>
          </table>
        </div>
        <div className="flex w-[19px] shrink-0 flex-col pt-[21px]">
          <button type="button" aria-label="向上" className="flex h-[19px] items-center justify-center"><Chevron w={11} h={8} d="M1 7L5.500 2L10 7" /></button>
          <div className="h-[21px] bg-[#cdcdcd]" />
          <button type="button" aria-label="向下" className="mt-auto flex h-[21px] items-center justify-center"><Chevron w={11} h={8} d="M1 1L5.500 6L10 1" /></button>
        </div>
      </div>
      <div className="mr-[19px] mt-px flex h-[19px]">
        <button type="button" aria-label="向左" className="flex w-5 items-center justify-center"><Chevron w={8} h={11} d="M7 1L2 5.500L7 10" /></button>
        <div className="w-[21px] bg-[#cdcdcd]" />
        <button type="button" aria-label="向右" className="ml-auto flex w-6 items-center justify-center"><Chevron w={8} h={11} d="M1 1L6 5.500L1 10" /></button>
      </div>
    </div>
  );
}

function Wizard() {
  return (
    <div
      role="dialog"
      aria-labelledby="wizard-title"
      className="absolute left-[411px] top-[274px] flex w-[673px] flex-col border border-[#a3a3a3] bg-[#f0f0f0] text-black shadow-[2px_5px_14px_rgba(0,0,0,0.4)]"
    >
      <div className="flex h-[37px] items-center bg-white pb-px pl-2 font-['Open_Sans','Noto_Sans_CJK_SC',sans-serif] text-[#999]">
        <h2 id="wizard-title" className="flex-1 leading-5">文本分列向导 - 第 1 步，共 3 步</h2>
        <button type="button" aria-label="帮助" className="w-[57px] text-center">?</button>
        <button type="button" aria-label="关闭" className="mr-[2px] flex w-[57px] justify-center">
          <svg width="13" height="13" viewBox="0 0 13 13"><path d="M0 0L13 13M13 0L0 13" stroke="#999" /></svg>
        </button>
      </div>
      <form className="flex flex-col pb-[11px] pl-2 pr-[9px] pt-[10px]" onSubmit={(e) => e.preventDefault()}>
        <p className="leading-5">使用此屏内容可选择各列，并设置其数据格式。</p>
        <div className="mt-[14px] flex gap-[13px]">
          <fieldset className="h-[160px] w-[235px] shrink-0 border border-[#dcdcdc]">
            <legend className="ml-[7px] leading-[18px]">列数据格式</legend>
            <div className="flex flex-col pl-[11px]">
              <FormatOption id="f-general" text="常规" k="G" checked className="mt-[14px] h-[18px]" />
              <FormatOption id="f-text" text="文本" k="T" className="mt-3 h-[18px]" />
              <div className="mt-2 flex h-[34px] items-center justify-between pr-[10px]">
                <FormatOption id="f-date" text="日期" k="D" suffix=":" />
                <div className="relative w-[121px]">
                  <select aria-label="日期格式" defaultValue="YMD" className="block h-[33px] w-full appearance-none border border-[#acacac] bg-white pl-[3px] text-[16px] leading-5">
                    <option>YMD</option>
                    <option>MDY</option>
                    <option>DMY</option>
                  </select>
                  <span className="pointer-events-none absolute inset-y-0 right-0 flex w-[22px] items-center justify-center border border-[#acacac] bg-[#dcdcdc]">
                    <svg width="10" height="6" viewBox="0 0 10 6"><path d="M.5 .5L5 5L9.500 .5" fill="none" stroke="#555" /></svg>
                  </span>
                </div>
              </div>
              <FormatOption id="f-skip" text="不导入此列(跳过)" k="I" className="mt-2 h-[18px]" />
            </div>
          </fieldset>
          <div className="flex min-w-0 flex-1 flex-col pt-12">
            <p className="font-['Open_Sans','Noto_Sans_CJK_SC',sans-serif] leading-5">
              “常规”数据格式将数值转换成数字，日期值会转换成日期，其余数据则转换成文本。
            </p>
            <button type="button" className="mt-1 h-[34px] w-[99px] self-center border border-[#adadad] bg-[#e1e1e1]">
              高级<Key>A</Key>...
            </button>
          </div>
        </div>
        <div className="mt-[15px] flex h-[30px] items-center">
          <label htmlFor="target" className="w-[94px] shrink-0">目标区域<Key>E</Key>:</label>
          <div className="flex h-full flex-1 border border-[#ababab] bg-white">
            <input id="target" defaultValue="=$B$1:$C$19" className="min-w-0 flex-1 bg-transparent pb-[3px] pl-1 text-[16px] outline-none" />
            <button type="button" aria-label="选择区域" className="flex w-[26px] items-center justify-center border-l border-[#ababab] bg-[#dcdcdc]">
              <svg width="18" height="20" viewBox="0 0 18 20" fill="none">
                <path d="M0 0H18V20H0Z" fill="#fff" />
                <path d="M0 0H6V4H0Z" fill="#2f62c4" />
                <path d="M6 0H18V4H6Z" fill="#a9bfe0" />
                <path d="M0 5H5V9H0ZM0 10H5V14H0Z" fill="#dfe9f6" />
                <path d="M7 15H18V20H7ZM13 10H18V20H13Z" fill="#9fc0ef" />
                <path d="M.5 .5H17.500V19.500H.5ZM0 4.500H18M0 9.500H18M0 14.500H18M6.500 4V20M12.500 0V20" stroke="#6d86b3" />
                <path d="M6 6L10 5L13 9L13 13L11 16L8 13L6 10Z" fill="#dc3a22" />
              </svg>
            </button>
          </div>
        </div>
        <fieldset className="mt-[50px] h-[218px] min-w-0 border border-[#dcdcdc]">
          <legend className="ml-[7px] leading-[18px]">数据预览<Key>P</Key></legend>
          <Preview />
        </fieldset>
        <div className="mt-5 flex h-[34px] justify-end gap-[13px]">
          <button type="button" className="w-[99px] border border-[#adadad] bg-[#e1e1e1]">取消</button>
          <button type="button" className="w-[102px] border border-[#adadad] bg-[#e1e1e1]">&lt; 上一步<Key>B</Key></button>
          <button type="button" disabled className="w-[105px] border border-[#bfbfbf] bg-[#cccccc] text-[#a0a0a0] [text-shadow:1px_1px_0_white]">下一步(N) &gt;</button>
          <button type="submit" className="w-[99px] border-2 border-[#0078d7] bg-[#e1e1e1]">完成<Key>F</Key></button>
        </div>
      </form>
    </div>
  );
}

export default function App() {
  return (
    <div className="relative flex h-screen flex-col overflow-hidden border-x border-t border-[#808080] bg-[#e6e6e6] font-['Noto_Sans_CJK_SC',sans-serif] text-[15px]">
      <header className="flex shrink-0 flex-col bg-[#217346]">
        <TitleBar />
        <TabStrip />
      </header>
      <Ribbon />
      <FormulaBar />
      <main className="flex min-h-0 flex-1">
        <Sheet />
        <SheetScrollbar />
      </main>
      <Wizard />
      <div className="absolute right-[2px] top-[676px] flex h-[74px] w-[10px] flex-col overflow-hidden rounded-full border border-[#e8e8e8] bg-[#939393] shadow-[0_3px_6px_rgba(0,0,0,0.25)]">
        <div className="mt-auto h-[22px] border-t-2 border-[#22a356] bg-linear-to-b from-[#31c567] to-[#7bf780]" />
      </div>
      <p className="absolute bottom-[5px] right-[13px] whitespace-nowrap font-['Liberation_Sans',sans-serif] text-[19px] leading-7 text-[#8e8e8e] [text-shadow:-1px_-1px_0_white]">
        CSDN @yingtianhaoxuan
      </p>
    </div>
  );
}
